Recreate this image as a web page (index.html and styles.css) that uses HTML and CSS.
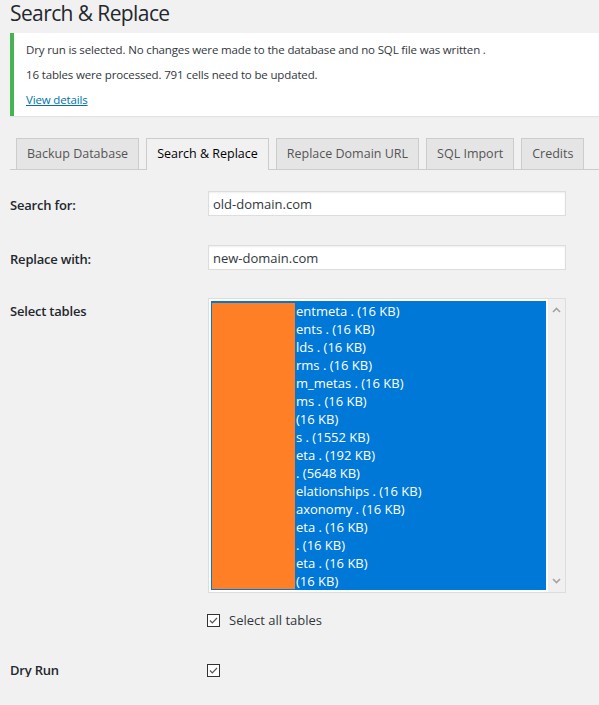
FILE: index.html
```html
<!DOCTYPE html>
<html lang="en">
<head>
<meta charset="utf-8">
<title>Search &amp; Replace</title>
<link rel="stylesheet" href="styles.css">
</head>
<body>
<div class="wrap">
  <h1 class="title">Search &amp; Replace</h1>
  <div class="notice">
    <p>Dry run is selected. No changes were made to the database and no SQL file was written .</p>
    <p>16 tables were processed. 791 cells need to be updated.</p>
    <p><a class="link" href="#">View details</a></p>
  </div>
  <nav class="tabs">
    <a class="tab" href="#">Backup Database</a>
    <a class="tab tab-active" href="#">Search &amp; Replace</a>
    <a class="tab" href="#">Replace Domain URL</a>
    <a class="tab" href="#">SQL Import</a>
    <a class="tab" href="#">Credits</a>
  </nav>
  <div class="form">
    <div class="row row-search">
      <label class="label">Search for:</label>
      <div class="field"><input class="text-input" type="text" value="old-domain.com"></div>
    </div>
    <div class="row row-replace">
      <label class="label">Replace with:</label>
      <div class="field"><input class="text-input" type="text" value="new-domain.com"></div>
    </div>
    <div class="row row-tables">
      <label class="label label-tables">Select tables</label>
      <div class="field">
        <div class="tables">
          <div class="tables-list">
            <div class="opt">entmeta . (16 KB)</div>
            <div class="opt">ents . (16 KB)</div>
            <div class="opt">lds . (16 KB)</div>
            <div class="opt">rms . (16 KB)</div>
            <div class="opt">m_metas . (16 KB)</div>
            <div class="opt">ms . (16 KB)</div>
            <div class="opt">(16 KB)</div>
            <div class="opt">s . (1552 KB)</div>
            <div class="opt">eta . (192 KB)</div>
            <div class="opt">. (5648 KB)</div>
            <div class="opt">elationships . (16 KB)</div>
            <div class="opt">axonomy . (16 KB)</div>
            <div class="opt">eta . (16 KB)</div>
            <div class="opt">. (16 KB)</div>
            <div class="opt">eta . (16 KB)</div>
            <div class="opt">(16 KB)</div>
            <div class="redact"></div>
          </div>
          <div class="scrollbar">
            <svg class="arrow" width="9" height="6" viewBox="0 0 9 6"><path d="M1 5 L4.5 1.5 L8 5" fill="none" stroke="#a3a3a3" stroke-width="1.6"/></svg>
            <svg class="arrow" width="9" height="6" viewBox="0 0 9 6"><path d="M1 1 L4.5 4.5 L8 1" fill="none" stroke="#a3a3a3" stroke-width="1.6"/></svg>
          </div>
        </div>
        <label class="check-line">
          <svg class="checkbox" width="13" height="13" viewBox="0 0 13 13"><rect x="0.5" y="0.5" width="12" height="12" fill="#fff" stroke="#333"/><path d="M3 6.5 L5.3 8.8 L10 4" fill="none" stroke="#555" stroke-width="1.2"/></svg>
          <span>Select all tables</span>
        </label>
      </div>
    </div>
    <div class="row row-dry">
      <label class="label">Dry Run</label>
      <div class="field">
        <svg class="checkbox" width="13" height="13" viewBox="0 0 13 13"><rect x="0.5" y="0.5" width="12" height="12" fill="#fff" stroke="#333"/><path d="M3 6.5 L5.3 8.8 L10 4" fill="none" stroke="#555" stroke-width="1.2"/></svg>
      </div>
    </div>
  </div>
</div>
</body>
</html>
```
FILE: styles.css
```css
html, body {
  margin: 0;
  padding: 0;
  background: #f1f1f1;
}
body {
  font-family: "Open Sans", "Noto Sans", sans-serif;
  font-size: 12px;
  color: #23282d;
  overflow: hidden;
}
.wrap {
  padding-left: 10px;
}
.title {
  margin: 0;
  font-size: 21px;
  font-weight: 400;
  line-height: 26px;
  letter-spacing: -0.6px;
  color: #23282d;
}
.notice {
  margin-top: 7px;
  background: #fff;
  border-left: 4px solid #46b450;
  box-shadow: 0 1px 1px rgba(0, 0, 0, 0.06);
  padding: 4px 12px 4px 12px;
}
.notice p {
  margin: 0;
  font-size: 11.5px;
  letter-spacing: -0.15px;
  line-height: 25px;
  color: #32373c;
}
.link {
  color: #0073aa;
  text-decoration: underline;
}
.tabs {
  display: flex;
  margin-top: 22px;
  border-bottom: 1px solid #ccc;
  padding-left: 6px;
  gap: 7px;
}
.tab {
  display: block;
  flex: none;
  white-space: nowrap;
  height: 30px;
  line-height: 30px;
  padding: 0 10px;
  border: 1px solid #ccc;
  border-bottom: none;
  background: #e5e5e5;
  color: #555;
  font-size: 12.5px;
  text-decoration: none;
}
.tab-active {
  background: #f1f1f1;
  color: #000;
  margin-bottom: -1px;
  height: 31px;
}
.form {
  padding-top: 21px;
}
.row {
  display: grid;
  grid-template-columns: 198px 358px;
  align-items: start;
}
.row-replace {
  margin-top: 29px;
}
.row-tables {
  margin-top: 28px;
}
.row-dry {
  margin-top: 37px;
}
.label {
  font-size: 13px;
  font-weight: 600;
  line-height: 20px;
  padding-top: 4px;
  letter-spacing: -0.2px;
  color: #23282d;
}
.label-tables {
  padding-top: 3px;
}
.row-dry .label {
  padding-top: 0;
  line-height: 13px;
}
.text-input {
  box-sizing: border-box;
  width: 358px;
  height: 25px;
  margin: 0;
  border: 1px solid #ddd;
  background: #fff;
  box-shadow: inset 0 1px 2px rgba(0, 0, 0, 0.07);
  padding: 0 4px;
  font-family: "Open Sans", "Noto Sans", sans-serif;
  font-size: 13px;
  color: #32373c;
  outline: none;
}
.tables {
  box-sizing: border-box;
  width: 358px;
  height: 295px;
  border: 1px solid #ddd;
  background: #fff;
  display: flex;
}
.tables-list {
  position: relative;
  flex: 1;
  margin: 2px;
  background: #0078d7;
  padding-top: 1px;
  overflow: hidden;
}
.opt {
  color: #fff;
  font-size: 13px;
  line-height: 18px;
  padding-left: 85px;
  white-space: nowrap;
}
.redact {
  position: absolute;
  left: 1px;
  top: 2px;
  width: 83px;
  height: 286px;
  background: #ff7f27;
}
.scrollbar {
  width: 17px;
  background: #f0f0f0;
  display: flex;
  flex-direction: column;
  justify-content: space-between;
  align-items: center;
  padding: 8px 0 8px;
}
.arrow {
  display: block;
}
.check-line {
  display: flex;
  align-items: center;
  margin-top: 21px;
  margin-left: -1px;
  font-size: 13px;
  color: #32373c;
}
.checkbox {
  display: block;
  flex: none;
}
.check-line span {
  margin-left: 9px;
  line-height: 13px;
}
.row-dry .field {
  margin-left: -1px;
}
```
